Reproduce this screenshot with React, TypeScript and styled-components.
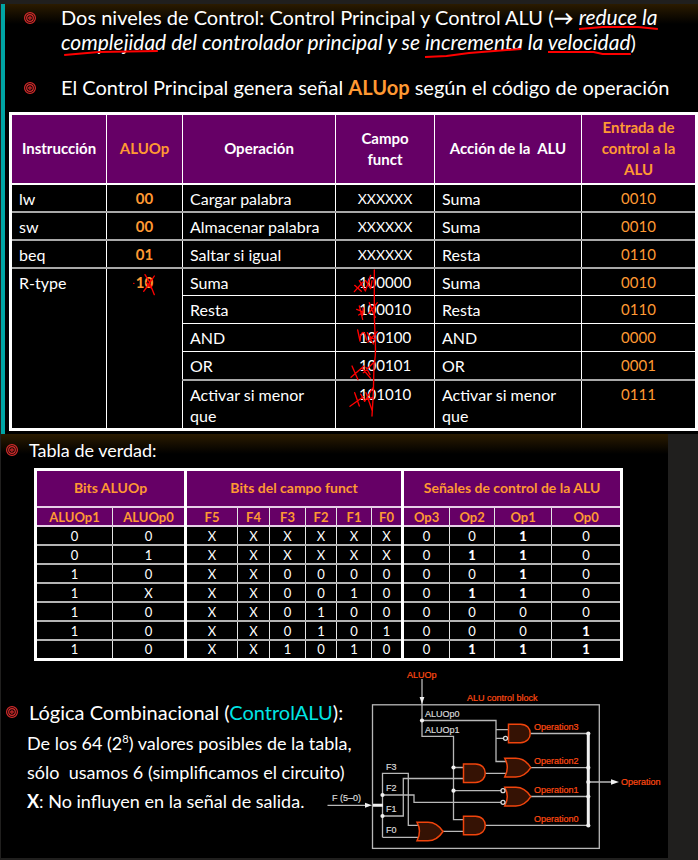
import React from "react";
import styled, { createGlobalStyle, css } from "styled-components";

const ORANGE = "#ff9933";
const PURPLE = "#660066";
const INK = "#ff0000";

const GlobalStyle = createGlobalStyle`
  *, *::before, *::after { box-sizing: border-box; }
  body {
    margin: 0;
    background: #201f1e;
    color: #ffffff;
    font-family: Lato, "Open Sans", sans-serif;
  }
`;

const Page = styled.main`
  padding: 4px 0 2px 1px;
`;

const Slide = styled.section`
  background: linear-gradient(#2b1b00, #000000 20px) #000000;
`;

const ControlSlide = styled(Slide)`
  border-left: 4px solid #00a5a5;
  padding: 1px 1px 3px 4px;
`;

const TruthSlide = styled(Slide)`
  margin-right: 30px;
  padding: 3px 0 0;
`;

const BulletList = styled.ul`
  list-style: none;
  margin: 0;
  padding: 0;
`;

const BulletItem = styled.li<{ $gap: number }>`
  display: grid;
  grid-template-columns: 37px 1fr;
  padding-left: 15px;
  margin-bottom: ${(p) => p.$gap}px;
  font-size: 20px;
  line-height: 25px;
`;

const Emphasis = styled.em`
  font-size: 21px;
  line-height: 24px;
`;

const BulletIcon = styled.svg`
  flex: none;
  width: 12px;
  height: 12px;
  margin-top: 7px;
  fill: none;
  stroke: #d62c2c;
  stroke-width: 1.2;
`;

const Heading = styled.h2<{ $size: number }>`
  display: flex;
  gap: 11px;
  margin: 0;
  padding-left: 5px;
  font-size: ${(p) => p.$size}px;
  font-weight: 400;
  line-height: 26px;
  white-space: nowrap;
`;

const Accent = styled.strong`
  color: ${ORANGE};
`;

const Cyan = styled.span`
  color: #00e5e5;
`;

const Marked = styled.span`
  position: relative;
  white-space: nowrap;
`;

const Underline = styled.svg`
  position: absolute;
  left: 0;
  bottom: -3px;
  width: 100%;
  height: 10px;
  overflow: visible;
  fill: none;
  stroke: ${INK};
  stroke-width: 2;
`;

const Ink = styled.svg<{ $left: string; $top: number; $width: number; $height: number }>`
  position: absolute;
  left: ${(p) => p.$left};
  top: ${(p) => p.$top}px;
  width: ${(p) => p.$width}px;
  height: ${(p) => p.$height}px;
  fill: none;
  stroke: ${INK};
  stroke-width: 4;
  stroke-linecap: round;
  stroke-linejoin: round;
  z-index: 1;
`;

const Grid = styled.table`
  width: 100%;
  table-layout: fixed;
  border-collapse: collapse;
  border: 3px solid #ffffff;
`;

const ControlTable = styled(Grid)`
  font-size: 16px;
  line-height: 21px;
`;

const ControlRow = styled.tr<{ $soft?: boolean; $height: number }>`
  height: ${(p) => p.$height}px;
  ${(p) =>
    p.$soft &&
    css`
      & > td:not([rowspan]) {
        border-bottom: 2px solid #a8a8a8;
      }
    `}
`;

const ControlHead = styled.th<{ $orange?: boolean }>`
  padding: 0 4px;
  background: ${PURPLE};
  border: 1px solid #ffffff;
  border-bottom-width: 2px;
  color: ${(p) => (p.$orange ? ORANGE : "#ffffff")};
  font-size: 15px;
  white-space: pre-line;
`;

const ControlCell = styled.td<{ $orange?: boolean }>`
  position: relative;
  padding: 3px 7px 2px;
  border: 1px solid #ffffff;
  vertical-align: top;
  color: ${(p) => (p.$orange ? ORANGE : "#ffffff")};
`;

const CodeCell = styled(ControlCell)<{ $bold?: boolean; $wildcard?: boolean }>`
  text-align: center;
  font-size: ${(p) => (p.$wildcard ? 14 : 15)}px;
  font-weight: ${(p) => (p.$bold ? 700 : 400)};
`;

const TruthFrame = styled.div`
  padding: 5px 47px 0 33px;
`;

const TruthTable = styled(Grid)`
  font-size: 13px;
  line-height: 16px;
  text-align: center;
`;

const TruthRow = styled.tr<{ $height: number }>`
  height: ${(p) => p.$height}px;
`;

const groupEdge = css<{ $edge?: boolean }>`
  border: 1px solid #e4e4e4;
  ${(p) => p.$edge && "border-right: 3px solid #ffffff;"}
`;

const TruthHead = styled.th<{ $edge?: boolean }>`
  ${groupEdge}
  padding: 0;
  background: ${PURPLE};
  color: ${ORANGE};
  border-bottom: 2px solid #e6cfe6;
`;

const GroupHead = styled(TruthHead)`
  font-size: 14px;
`;

const TruthCell = styled.td<{ $edge?: boolean; $bold?: boolean }>`
  ${groupEdge}
  padding: 0;
  border-bottom: 2px solid #b4b4b4;
  font-weight: ${(p) => (p.$bold ? 900 : 400)};
`;

const LogicArea = styled.div`
  display: flex;
  align-items: flex-start;
  padding-top: 3px;
`;

const LogicText = styled.div`
  flex: 0 0 325px;
  min-width: 0;
  padding-top: 35px;
  white-space: nowrap;
`;

const Notes = styled.div`
  padding: 4px 0 0 26px;
  font-size: 18px;
  line-height: 29px;
`;

const Note = styled.p`
  margin: 0;
  white-space: pre;
`;

const Power = styled.sup`
  font-size: 11px;
  line-height: 0;
`;

const Circuit = styled.svg`
  flex: 0 0 340px;
  height: 194px;
  fill: none;
  stroke: #b8b8b8;
  stroke-width: 1.3;
  font-family: "Liberation Sans", Arial, sans-serif;
  font-size: 9px;
  text { stroke: #d8d8d8; stroke-width: 0.2; fill: #d8d8d8; }
  .hot { fill: #ff4a12; stroke: #ff4a12; }
  .gate { fill: #351204; stroke: #f0440c; stroke-width: 1.5; }
  .dot { fill: #f0f0f0; stroke: none; }
  .bubble { fill: #000000; stroke: #d8d8d8; }
  .bus { stroke: #f0f0f0; stroke-width: 3; }
`;

function Target() {
  return (
    <BulletIcon viewBox="0 0 12 12" aria-hidden="true">
      <circle cx="6" cy="6" r="5.4" />
      <circle cx="6" cy="6" r="3.3" />
      <circle cx="6" cy="6" r="1.2" />
    </BulletIcon>
  );
}

function Stroked({ children, d }: { children: React.ReactNode; d: string }) {
  return (
    <Marked>
      {children}
      <Underline viewBox="0 0 100 10" preserveAspectRatio="none" aria-hidden="true">
        <path d={d} vectorEffect="non-scaling-stroke" />
      </Underline>
    </Marked>
  );
}

const controlColumns = [96, 76, 153, 99, 147, 115];

const controlRows = [
  { name: "lw", op: "00", action: "Cargar palabra", funct: "XXXXXX", alu: "Suma", out: "0010", soft: true },
  { name: "sw", op: "00", action: "Almacenar palabra", funct: "XXXXXX", alu: "Suma", out: "0010", soft: true },
  { name: "beq", op: "01", action: "Saltar si igual", funct: "XXXXXX", alu: "Resta", out: "0110", soft: true },
  { name: "R-type", op: "10", action: "Suma", funct: "100000", alu: "Suma", out: "0010" },
  { action: "Resta", funct: "100010", alu: "Resta", out: "0110" },
  { action: "AND", funct: "100100", alu: "AND", out: "0000" },
  { action: "OR", funct: "100101", alu: "OR", out: "0001", soft: true },
  { action: "Activar si menor que", funct: "101010", alu: "Activar si menor que", out: "0111", tall: true },
];

const truthColumns = [77, 73, 52, 32, 36, 31, 35, 31, 47, 45, 57, 70];
const truthHeads = ["ALUOp1", "ALUOp0", "F5", "F4", "F3", "F2", "F1", "F0", "Op3", "Op2", "Op1", "Op0"];
const truthRows = [
  "00XXXXXX0010",
  "01XXXXXX0110",
  "10XX00000010",
  "1XXX00100110",
  "10XX01000000",
  "10XX01010001",
  "10XX10100111",
];
const isEdge = (i: number) => i === 1 || i === 7;

function FunctMarks() {
  return (
    <Ink $left="calc(50% - 55px)" $top={-9} $width={100} $height={160} viewBox="0 0 300 480" aria-hidden="true">
      <path d="M133 30 V170 L136 250 Q138 290 132 312 L130 400 L126 468" />
      <path d="M74 76 L94 94 M73 95 L99 66 M88 62 L106 93 L122 46 M107 62 L122 86 L126 62" />
      <path d="M80 148 L100 156 L86 165 M88 138 L98 178 M100 144 L98 166 M118 128 L126 150 L136 172 M116 160 L142 128" />
      <path d="M83 210 L90 243 L92 225 Q100 210 106 225 L110 240 M112 218 L130 252 M114 246 L142 215 M118 228 L138 240" />
      <path d="M66 318 L84 359 M63 352 L102 318 M96 324 L122 355 M100 338 L130 308 M108 322 L120 344" />
      <path d="M74 398 L88 438 M60 439 L100 410 M92 402 L104 424 M104 424 L128 384 M108 398 L126 450 M112 418 L128 412" />
    </Ink>
  );
}

function OpMark() {
  return (
    <Ink $left="calc(50% - 12px)" $top={3} $width={24} $height={24} viewBox="0 0 72 72" aria-hidden="true">
      <path d="M2 34 H3 M36 8 L48 28 L64 68 M64 12 L48 36 L32 58 M40 32 L58 52 M54 24 L40 48" />
    </Ink>
  );
}

const andGate = (x: number, y: number) =>
  `M${x} ${y} h12 c13 0 13 18.5 0 18.5 h-12 z`;
const orGate = (x: number, y: number) =>
  `M${x} ${y} h11 q9 0 15 9.3 q-6 9.3 -15 9.3 h-11 q5 -9.3 0 -18.6 z`;

const whiteLabels: [string, number, number][] = [
  ["ALUOp0", 425, 717],
  ["ALUOp1", 425, 733],
  ["F3", 386, 770],
  ["F2", 386, 791],
  ["F1", 386, 812],
  ["F0", 386, 833],
  ["F (5–0)", 332, 801],
];
const hotLabels: [string, number, number][] = [
  ["ALUOp", 407, 678],
  ["ALU control block", 467, 701],
  ["Operation3", 534, 730],
  ["Operation2", 534, 764],
  ["Operation1", 534, 793],
  ["Operation0", 534, 822],
  ["Operation", 621, 785],
];
const dots = [
  [422, 720.5], [453.5, 767.5], [453.5, 790.7], [382.5, 795], [382.5, 816],
  [588.3, 733.5], [588.3, 767.7], [588.3, 782], [588.3, 796.5], [588.3, 825.5],
];

function ControlCircuit() {
  return (
    <Circuit viewBox="326 664 340 194" role="img" aria-label="ALU control block">
      <rect x="372.5" y="704.8" width="226.8" height="143.6" />
      <path d="M422 679 V736.3 H453.5 V819.6 H464 M422 720.5 H496 V761.5 H507 M496 729.6 H509 M496 738.3 H503" />
      <path d="M453.5 767.5 H464 M453.5 790.7 H501 M485 773.3 H507" />
      <path d="M382.5 837.3 V773.3 H408.3 V825.3 H420 M382.5 795 H414 V802.3 H501 M382.5 816 H403.3 V778.5 H464 M382.5 837.3 H420 M443 831.3 H464" />
      <path d="M531 733.5 H588 M531 767.7 H588 M531 796.5 H588 M485 825.4 H588 M588 782 H613 M327.5 805.3 H367" />
      <path className="bus" d="M588.3 733.5 V825.5 M373 805.3 H383" />
      <path className="dot" d="M419.6 697 h4.8 l-2.4 7 z M365 802.8 v5 l7 -2.5 z M611 779.3 v5.4 l8 -2.7 z" />
      <path className="gate" d={andGate(508.5, 724.2)} />
      <path className="gate" d={andGate(463.5, 763.9)} />
      <path className="gate" d={andGate(463.5, 816.2)} />
      <path className="gate" d={orGate(504.8, 758.3)} />
      <path className="gate" d={orGate(504.8, 787.3)} />
      <path className="gate" d={orGate(417, 822.2)} />
      <circle className="bubble" cx="505.5" cy="738.3" r="2" />
      <circle className="bubble" cx="503" cy="790.7" r="2" />
      <circle className="bubble" cx="503" cy="802.3" r="2" />
      {dots.map(([x, y]) => (
        <circle key={`${x}-${y}`} className="dot" cx={x} cy={y} r="2.1" />
      ))}
      {whiteLabels.map(([label, x, y]) => (
        <text key={label} x={x} y={y}>{label}</text>
      ))}
      {hotLabels.map(([label, x, y]) => (
        <text key={label} className="hot" x={x} y={y}>{label}</text>
      ))}
    </Circuit>
  );
}

export default function App() {
  return (
    <Page>
      <GlobalStyle />
      <ControlSlide>
        <BulletList>
          <BulletItem $gap={20}>
            <Target />
            <span>
              Dos niveles de Control: Control Principal y Control ALU (<b>→</b>{" "}
              <Emphasis>
                <Stroked d="M0 7 L30 5 H75 L100 7">reduce la</Stroked>{" "}
                <Stroked d="M3 8 L36 5 L92 4">complejidad</Stroked> del controlador principal y se{" "}
                <Stroked d="M0 10 L22 9 L45 6 L98 2">incrementa</Stroked> la{" "}
                <Stroked d="M0 5 H55 L66 7 H100">velocidad</Stroked>
              </Emphasis>
              )
            </span>
          </BulletItem>
          <BulletItem $gap={12}>
            <Target />
            <span>
              El Control Principal genera señal <Accent>ALUop</Accent> según el código de operación
            </span>
          </BulletItem>
        </BulletList>
        <ControlTable>
          <colgroup>
            {controlColumns.map((w, i) => (
              <col key={i} width={w} />
            ))}
          </colgroup>
          <thead>
            <ControlRow $height={70}>
              <ControlHead>Instrucción</ControlHead>
              <ControlHead $orange>ALUOp</ControlHead>
              <ControlHead>Operación</ControlHead>
              <ControlHead>{"Campo\nfunct"}</ControlHead>
              <ControlHead>Acción de la&nbsp; ALU</ControlHead>
              <ControlHead $orange>{"Entrada de\ncontrol a la\nALU"}</ControlHead>
            </ControlRow>
          </thead>
          <tbody>
            {controlRows.map((row, i) => (
              <ControlRow key={i} $soft={row.soft} $height={row.tall ? 49 : 28}>
                {row.name && <ControlCell rowSpan={row.name === "R-type" ? 5 : undefined}>{row.name}</ControlCell>}
                {row.op && (
                  <CodeCell $orange $bold rowSpan={row.op === "10" ? 5 : undefined}>
                    {row.op}
                    {row.op === "10" && <OpMark />}
                  </CodeCell>
                )}
                <ControlCell>{row.action}</ControlCell>
                <CodeCell $wildcard={row.funct.startsWith("X")}>
                  {row.funct}
                  {row.op === "10" && <FunctMarks />}
                </CodeCell>
                <ControlCell>{row.alu}</ControlCell>
                <CodeCell $orange>{row.out}</CodeCell>
              </ControlRow>
            ))}
          </tbody>
        </ControlTable>
      </ControlSlide>

      <TruthSlide>
        <Heading $size={18}>
          <Target />
          <span>Tabla de verdad:</span>
        </Heading>
        <TruthFrame>
          <TruthTable>
            <colgroup>
              {truthColumns.map((w, i) => (
                <col key={i} width={w} />
              ))}
            </colgroup>
            <thead>
              <TruthRow $height={38}>
                <GroupHead colSpan={2} $edge>Bits ALUOp</GroupHead>
                <GroupHead colSpan={6} $edge>Bits del campo funct</GroupHead>
                <GroupHead colSpan={4}>Señales de control de la ALU</GroupHead>
              </TruthRow>
              <TruthRow $height={19}>
                {truthHeads.map((h, i) => (
                  <TruthHead key={h} $edge={isEdge(i)}>{h}</TruthHead>
                ))}
              </TruthRow>
            </thead>
            <tbody>
              {truthRows.map((row) => (
                <TruthRow key={row} $height={19}>
                  {row.split("").map((v, i) => (
                    <TruthCell key={i} $edge={isEdge(i)} $bold={i > 7 && v === "1"}>{v}</TruthCell>
                  ))}
                </TruthRow>
              ))}
            </tbody>
          </TruthTable>
        </TruthFrame>
        <LogicArea>
          <LogicText>
            <Heading $size={20}>
              <Target />
              <span>
                Lógica Combinacional (<Cyan>ControlALU</Cyan>):
              </span>
            </Heading>
            <Notes>
              <Note>De los 64 (2<Power>8</Power>) valores posibles de la tabla,</Note>
              <Note>{"sólo  usamos 6 (simplificamos el circuito)"}</Note>
              <Note><strong>X</strong>: No influyen en la señal de salida.</Note>
            </Notes>
          </LogicText>
          <ControlCircuit />
        </LogicArea>
      </TruthSlide>
    </Page>
  );
}
